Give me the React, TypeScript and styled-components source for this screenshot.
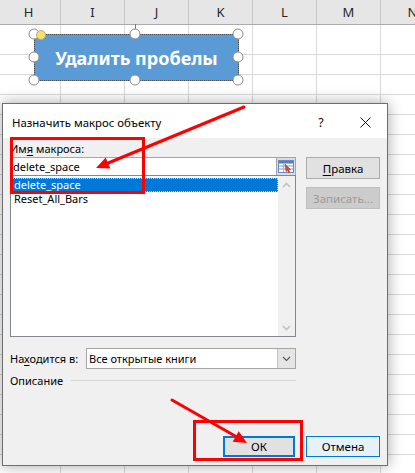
import React from "react";
import styled, { createGlobalStyle } from "styled-components";

const GlobalStyle = createGlobalStyle`
  html, body {
    margin: 0;
    padding: 0;
    background: #ffffff;
  }
  body {
    font-family: "Noto Sans", "Liberation Sans", sans-serif;
  }
`;

const Sheet = styled.div`
  position: relative;
  width: 415px;
  height: 473px;
  overflow: hidden;
  background: #ffffff;
`;

const HeaderRow = styled.div`
  display: flex;
  height: 25px;
  margin-left: -3px;
  box-sizing: border-box;
  background: #e6e6e6;
  border-bottom: 1px solid #ababab;
`;

const HeaderCell = styled.div`
  flex: 0 0 64px;
  box-sizing: border-box;
  border-right: 1px solid #c8c8c8;
  display: flex;
  align-items: center;
  justify-content: center;
  font-size: 13px;
  color: #262626;
`;

const GridRow = styled.div<{ $h: number }>`
  display: flex;
  height: ${(p) => p.$h}px;
  margin-left: -3px;
  box-sizing: border-box;
  border-bottom: 1px solid #dadada;
`;

const GridCell = styled.div`
  flex: 0 0 64px;
  box-sizing: border-box;
  border-right: 1px solid #dadada;
`;

const ShapeBox = styled.div`
  position: absolute;
  left: 34px;
  top: 34px;
  width: 205px;
  height: 47px;
  box-sizing: border-box;
  background: #5b9bd5;
  border: 1px dotted #4a4a4a;
  display: flex;
  align-items: center;
  justify-content: center;
  color: #ffffff;
  font-weight: 700;
  font-size: 18px;
`;

const RotLine = styled.div`
  position: absolute;
  left: 135px;
  top: 24px;
  width: 1px;
  height: 8px;
  background: #7a7a7a;
`;

const Handle = styled.div<{ $x: number; $y: number; $yellow?: boolean }>`
  position: absolute;
  left: ${(p) => p.$x}px;
  top: ${(p) => p.$y}px;
  width: ${(p) => (p.$yellow ? 8 : 9)}px;
  height: ${(p) => (p.$yellow ? 8 : 9)}px;
  transform: translate(-50%, -50%);
  border-radius: 50%;
  background: ${(p) => (p.$yellow ? "#f7dd73" : "#ffffff")};
  border: 1.5px solid ${(p) => (p.$yellow ? "#c9ab4d" : "#8c8c8c")};
`;

const Dialog = styled.div`
  position: absolute;
  left: 2px;
  top: 103px;
  width: 386px;
  height: 363px;
  box-sizing: border-box;
  border: 1px solid #6e6e6e;
  background: #f0f0f0;
  box-shadow: 0 0 14px rgba(0, 0, 0, 0.35);
  display: flex;
  flex-direction: column;
  font-size: 11px;
  color: #000000;
`;

const TitleBar = styled.div`
  height: 34px;
  flex: 0 0 34px;
  background: #ffffff;
  display: flex;
  align-items: center;
  padding-left: 9px;
`;

const Title = styled.div`
  flex: 1;
  font-size: 11.4px;
  padding-top: 2px;
`;

const TitleButton = styled.div`
  width: 44px;
  height: 34px;
  display: flex;
  align-items: center;
  justify-content: center;
  font-size: 12.5px;
  color: #111;
  padding-top: 2px;
  box-sizing: border-box;
`;

const Body = styled.div`
  flex: 1;
  display: flex;
  flex-direction: column;
  padding: 3px 7px 8px 7px;
`;

const TopArea = styled.div`
  display: grid;
  grid-template-columns: 286px 74px;
  column-gap: 10px;
`;

const Column = styled.div`
  display: flex;
  flex-direction: column;
`;

const Label = styled.div`
  height: 16px;
  line-height: 16px;
  white-space: nowrap;
`;

const Key = styled.span`
  text-decoration: underline;
  text-underline-offset: 2px;
`;

const InputRow = styled.div`
  display: flex;
  height: 19px;
`;

const TextBox = styled.div`
  flex: 1;
  box-sizing: border-box;
  background: #ffffff;
  border: 1px solid #a5a5a5;
  border-right: none;
  line-height: 17px;
  padding-left: 2px;
`;

const IconButton = styled.div`
  flex: 0 0 20px;
  box-sizing: border-box;
  background: #dcdcdc;
  border: 1px solid #a5a5a5;
  display: flex;
  align-items: center;
  justify-content: center;
`;

const ListBox = styled.div`
  margin-top: -1px;
  height: 162px;
  box-sizing: border-box;
  background: #ffffff;
  border: 1px solid #828790;
  display: flex;
`;

const Items = styled.div`
  flex: 1;
  padding: 2px 0 0 0;
`;

const Item = styled.div<{ $selected?: boolean }>`
  height: 14px;
  line-height: 12px;
  box-sizing: border-box;
  padding-left: 2px;
  background: ${(p) => (p.$selected ? "#0078d7" : "transparent")};
  color: ${(p) => (p.$selected ? "#ffffff" : "#000000")};
  border: 1px dotted ${(p) => (p.$selected ? "#ffd27a" : "transparent")};
`;

const ScrollBar = styled.div`
  flex: 0 0 17px;
  background: #f0f0f0;
  display: flex;
  flex-direction: column;
  justify-content: space-between;
  align-items: center;
  padding: 6px 0 5px;
`;

const SideButton = styled.div<{ $disabled?: boolean }>`
  height: 22px;
  box-sizing: border-box;
  background: ${(p) => (p.$disabled ? "#cccccc" : "#e1e1e1")};
  border: 1px solid ${(p) => (p.$disabled ? "#bfbfbf" : "#adadad")};
  color: ${(p) => (p.$disabled ? "#9a9a9a" : "#000000")};
  display: flex;
  align-items: center;
  justify-content: center;
  font-size: 11.5px;
`;

const SideColumn = styled(Column)`
  padding-top: 16px;
  gap: 8px;
`;

const LocationRow = styled.div`
  display: flex;
  align-items: center;
  width: 286px;
  height: 21px;
  margin-top: 11px;
`;

const LocationLabel = styled.div`
  flex: 0 0 76px;
  white-space: nowrap;
`;

const Combo = styled.div`
  flex: 1;
  height: 21px;
  box-sizing: border-box;
  background: #ffffff;
  border: 1px solid #a5a5a5;
  display: flex;
`;

const ComboText = styled.div`
  flex: 1;
  line-height: 19px;
  padding-left: 2px;
`;

const ComboArrow = styled.div`
  flex: 0 0 17px;
  background: #e5e5e5;
  border-left: 1px solid #c4c4c4;
  display: flex;
  align-items: center;
  justify-content: center;
`;

const DescRow = styled.div`
  display: flex;
  align-items: center;
  width: 286px;
  height: 16px;
  margin-top: 3px;
`;

const DescLine = styled.div`
  flex: 1;
  height: 1px;
  margin-left: 8px;
  background: #d5d5d5;
`;

const Footer = styled.div`
  margin-top: auto;
  display: flex;
  justify-content: flex-end;
  gap: 11px;
`;

const DialogButton = styled.div<{ $primary?: boolean }>`
  width: ${(p) => (p.$primary ? 72 : 74)}px;
  height: 21px;
  box-sizing: border-box;
  background: ${(p) => (p.$primary ? "#e1e1e1" : "#e5f1fb")};
  border: ${(p) => (p.$primary ? 2 : 1)}px solid #0078d7;
  display: flex;
  align-items: center;
  justify-content: center;
  font-size: 11.5px;
`;

const Annotations = styled.svg`
  position: absolute;
  left: 0;
  top: 0;
  pointer-events: none;
`;

const columns = ["H", "I", "J", "K", "L", "M", "N"];
const rows = [30, ...Array.from({ length: 21 }, () => 20)];

const handles: Array<[number, number]> = [
  [34, 34],
  [135, 34],
  [238, 34],
  [34, 57],
  [238, 57],
  [34, 80],
  [135, 80],
  [238, 80],
];

const Chevron = ({ up }: { up?: boolean }) => (
  <svg width="9" height="6" viewBox="0 0 9 6">
    <path
      d={up ? "M1 5 L4.5 1.5 L8 5" : "M1 1 L4.5 4.5 L8 1"}
      fill="none"
      stroke="#c2c2c2"
      strokeWidth="1.6"
    />
  </svg>
);

const MacroIcon = () => (
  <svg width="16" height="13" viewBox="0 0 16 13">
    <rect x="0.5" y="0.5" width="15" height="12" fill="#ffffff" stroke="#6a8cc0" />
    <rect x="1" y="1" width="14" height="2.5" fill="#4f7fc8" />
    <line x1="1" y1="6" x2="15" y2="6" stroke="#7ba0d6" />
    <line x1="1" y1="9" x2="15" y2="9" stroke="#7ba0d6" />
    <line x1="5.5" y1="3" x2="5.5" y2="12" stroke="#9bb6de" />
    <path d="M7 4 L12.5 9.5 L10.5 9.8 L11.8 12.3 L10.6 12.8 L9.4 10.3 L8 11.6 Z" fill="#e04a2a" stroke="#9c2a12" strokeWidth="0.5" />
  </svg>
);

export default function App() {
  return (
    <Sheet>
      <GlobalStyle />
      <HeaderRow>
        {columns.map((c) => (
          <HeaderCell key={c}>{c}</HeaderCell>
        ))}
      </HeaderRow>
      {rows.map((h, i) => (
        <GridRow key={i} $h={h}>
          {columns.map((c) => (
            <GridCell key={c} />
          ))}
        </GridRow>
      ))}

      <RotLine />
      <ShapeBox>Удалить пробелы</ShapeBox>
      {handles.map(([x, y]) => (
        <Handle key={`${x}-${y}`} $x={x} $y={y} />
      ))}
      <Handle $x={41} $y={35} $yellow />

      <Dialog>
        <TitleBar>
          <Title>Назначить макрос объекту</Title>
          <TitleButton>?</TitleButton>
          <TitleButton>
            <svg width="11" height="11" viewBox="0 0 11 11">
              <path d="M0.5 0.5 L10.5 10.5 M10.5 0.5 L0.5 10.5" stroke="#111" strokeWidth="1" />
            </svg>
          </TitleButton>
        </TitleBar>
        <Body>
          <TopArea>
            <Column>
              <Label>
                Им<Key>я</Key> макроса:
              </Label>
              <InputRow>
                <TextBox>delete_space</TextBox>
                <IconButton>
                  <MacroIcon />
                </IconButton>
              </InputRow>
              <ListBox>
                <Items>
                  <Item $selected>delete_space</Item>
                  <Item>Reset_All_Bars</Item>
                </Items>
                <ScrollBar>
                  <Chevron up />
                  <Chevron />
                </ScrollBar>
              </ListBox>
            </Column>
            <SideColumn>
              <SideButton>
                <Key>П</Key>равка
              </SideButton>
              <SideButton $disabled>Записать...</SideButton>
            </SideColumn>
          </TopArea>
          <LocationRow>
            <LocationLabel>
              На<Key>х</Key>одится в:
            </LocationLabel>
            <Combo>
              <ComboText>Все открытые книги</ComboText>
              <ComboArrow>
                <svg width="9" height="6" viewBox="0 0 9 6">
                  <path d="M1 1 L4.5 4.5 L8 1" fill="none" stroke="#555" strokeWidth="1.1" />
                </svg>
              </ComboArrow>
            </Combo>
          </LocationRow>
          <DescRow>
            Описание
            <DescLine />
          </DescRow>
          <Footer>
            <DialogButton $primary>ОК</DialogButton>
            <DialogButton>Отмена</DialogButton>
          </Footer>
        </Body>
      </Dialog>

      <Annotations width="415" height="473" viewBox="0 0 415 473">
        <rect x="11.5" y="138.5" width="132" height="54" fill="none" stroke="#ff0000" strokeWidth="3" />
        <rect x="194.5" y="421.5" width="107" height="38" fill="none" stroke="#ff0000" strokeWidth="3" />
        <line x1="244" y1="107" x2="107" y2="163.5" stroke="#ff0000" strokeWidth="3" strokeLinecap="round" />
        <polygon points="96,168 110.3,168.6 105.7,157.4" fill="#ff0000" />
        <line x1="172" y1="400" x2="236" y2="436.5" stroke="#ff0000" strokeWidth="3" strokeLinecap="round" />
        <polygon points="247,443 238.7,431.3 232.7,441.7" fill="#ff0000" />
      </Annotations>
    </Sheet>
  );
}
